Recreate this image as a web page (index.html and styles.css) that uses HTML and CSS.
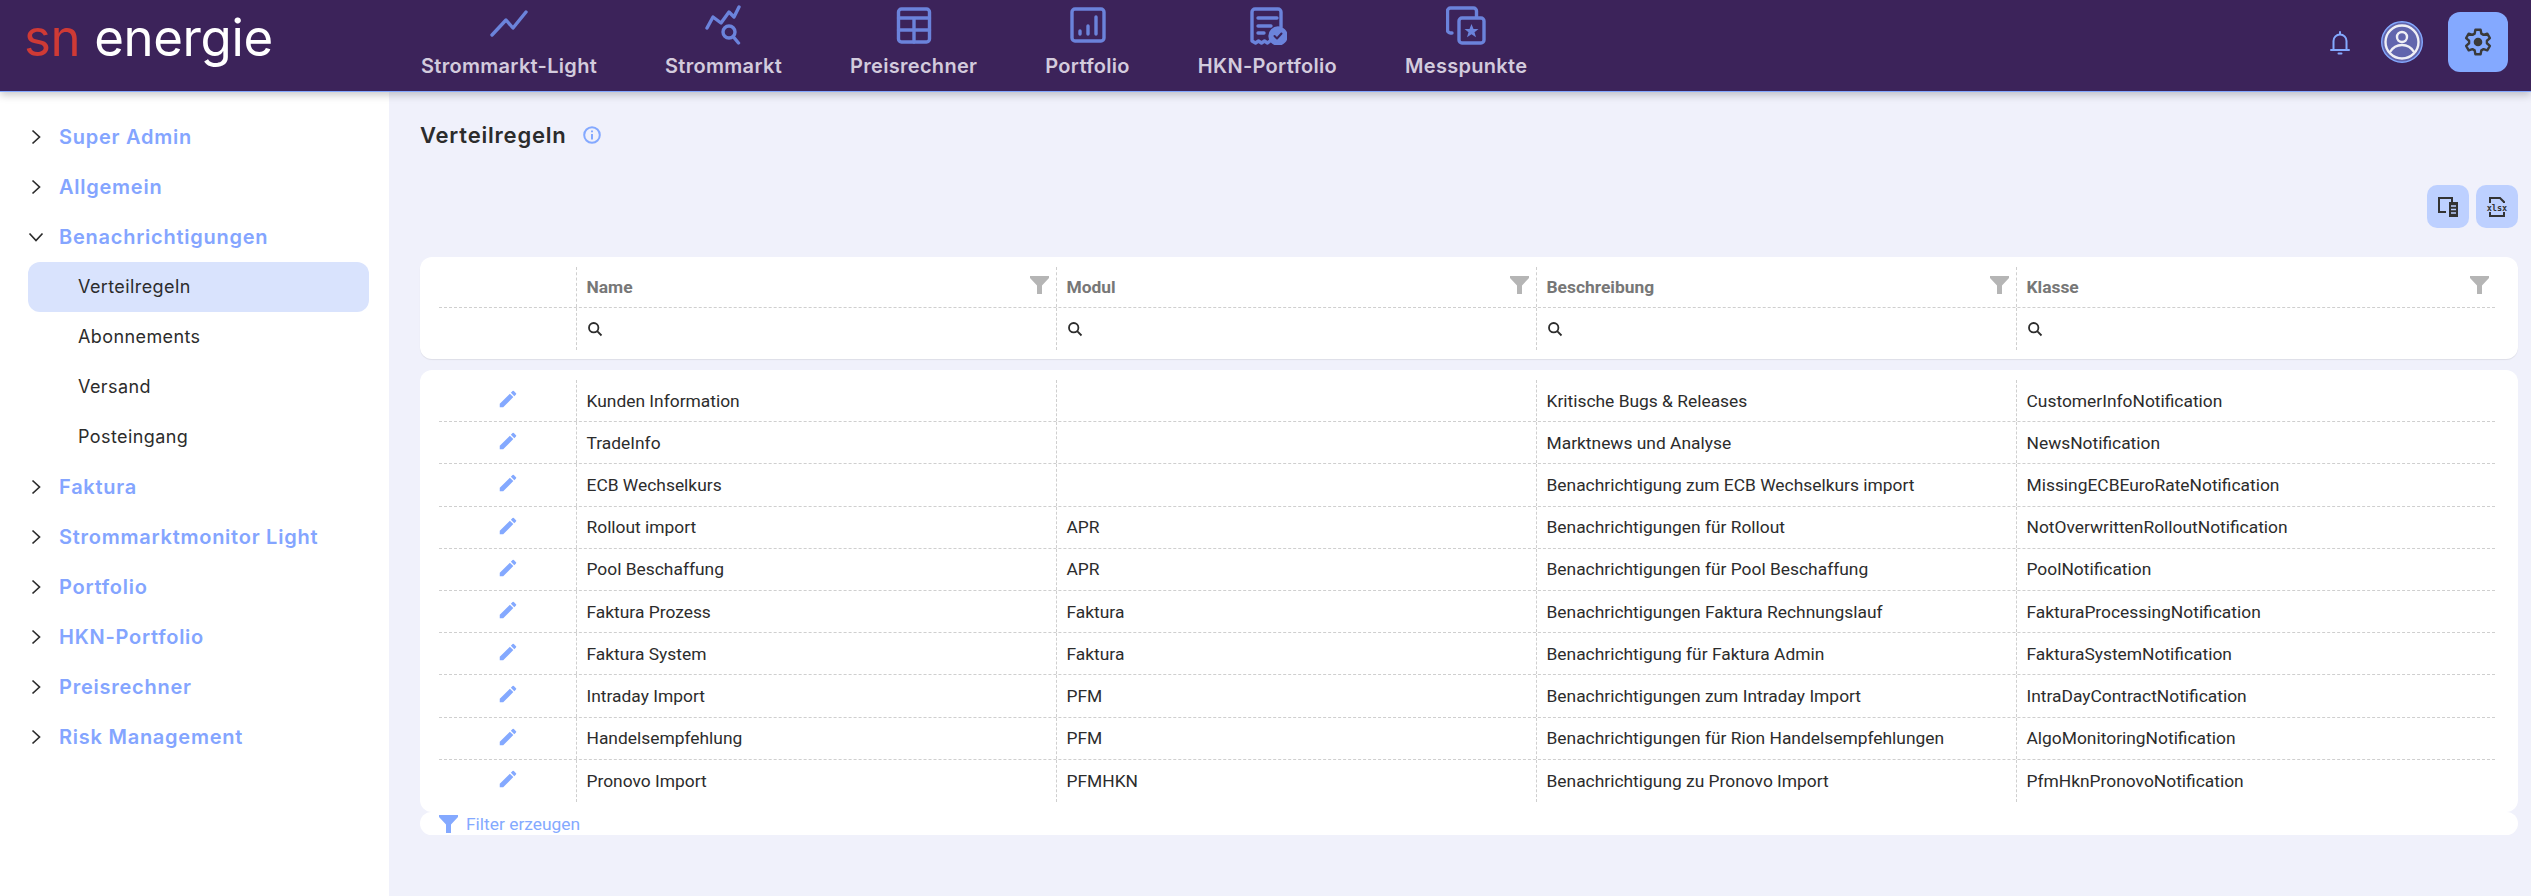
FILE: index.html
```html
<!DOCTYPE html>
<html lang="de">
<head>
<meta charset="utf-8">
<title>Verteilregeln</title>
<link rel="stylesheet" href="styles.css">
</head>
<body>
<svg class="defs" width="0" height="0" aria-hidden="true">
  <symbol id="pencil" viewBox="0 0 24 24"><path d="M3 17.25V21h3.75L17.81 9.94l-3.75-3.75L3 17.25zM20.71 7.04a1 1 0 0 0 0-1.41l-2.34-2.34a1 1 0 0 0-1.41 0l-1.83 1.83 3.75 3.75 1.83-1.83z"/></symbol>
  <symbol id="search" viewBox="0 0 16 16"><circle cx="6.7" cy="6.7" r="4.7" fill="none" stroke="currentColor" stroke-width="1.8"/><path d="M10.2 10.2l4.3 4.3" stroke="currentColor" stroke-width="1.8" fill="none"/></symbol>
  <symbol id="funnel" viewBox="0 0 19 18"><path d="M0 0h19v2L12 9.5V18H7V9.5L0 2z"/></symbol>
  <symbol id="chev-r" viewBox="0 0 12 16"><path d="M2.5 1.5L9.5 8l-7 6.500" fill="none" stroke="currentColor" stroke-width="1.700"/></symbol>
  <symbol id="chev-d" viewBox="0 0 16 12"><path d="M1.500 2.500L8 9.500l6.500-7" fill="none" stroke="currentColor" stroke-width="1.700"/></symbol>
</svg>

<header class="topbar">
  <div class="logo"><span class="logo-sn">sn</span> energie</div>
  <nav class="mainnav">
    <a class="navitem">
      <svg class="navicon" viewBox="0 0 40 40"><path d="M3 30L17 15l7 8L37 7"/></svg>
      <span>Strommarkt-Light</span>
    </a>
    <a class="navitem">
      <svg class="navicon" viewBox="0 0 40 40"><path d="M3 23L9 12l8 6 8-11 5 5 5-10"/><circle cx="25" cy="27" r="6"/><path d="M29.500 32l5 6"/></svg>
      <span>Strommarkt</span>
    </a>
    <a class="navitem">
      <svg class="navicon" viewBox="0 0 40 40"><rect x="4.500" y="4" width="31" height="33" rx="3"/><path d="M4.500 13h31M4.500 25h31M20 13v24"/></svg>
      <span>Preisrechner</span>
    </a>
    <a class="navitem">
      <svg class="navicon" viewBox="0 0 40 40"><rect x="4" y="4" width="32" height="32" rx="3"/><path d="M12 29v-3M20 29v-8M28 29V12"/></svg>
      <span>Portfolio</span>
    </a>
    <a class="navitem">
      <svg class="navicon" viewBox="0 0 40 40"><path d="M23 36l-2.500 2-3-2-3 2-3-2-3 2-3.500-2V7a3 3 0 0 1 3-3h23a3 3 0 0 1 3 3v15"/><path d="M11 13h19M11 21h13M11 28h6"/><circle class="solid" cx="31" cy="31" r="8"/><path class="tick" d="M27.500 31l2.500 2.500 4.500-5"/></svg>
      <span>HKN-Portfolio</span>
    </a>
    <a class="navitem">
      <svg class="navicon" viewBox="0 0 40 40"><path d="M6 28H4.500a3 3 0 0 1-3-3V6a3 3 0 0 1 3-3h23a3 3 0 0 1 3 3v6"/><rect x="13" y="13" width="25" height="25" rx="3"/><path class="solid noline" d="M25.500 19l2 5h5l-4 3.300 1.500 5-4.500-3-4.500 3 1.500-5-4-3.300h5z"/></svg>
      <span>Messpunkte</span>
    </a>
  </nav>
  <div class="topactions">
    <svg class="bell" viewBox="0 0 20 25"><path d="M1 20h18M3.500 20v-9a6.500 6.500 0 0 1 13 0v9M10 2v2.500M8.500 23.500h3"/></svg>
    <svg class="avatar" viewBox="0 0 42 42"><circle class="av-bg" cx="21" cy="21" r="20.300"/><circle class="av-line" cx="21" cy="21" r="16.500"/><circle class="av-line" cx="21" cy="16" r="5"/><path class="av-line" d="M9 31c3-5 7.500-7 12-7s9 2 12 7"/></svg>
    <button class="gearbtn">
      <svg class="gear" viewBox="0 0 28 28"><path d="M10.630 5.660L11.400 1.770H16.600L17.370 5.660L19.540 6.910L23.290 5.640L25.890 10.140L22.910 12.750V15.250L25.890 17.860L23.290 22.360L19.540 21.090L17.370 22.340L16.600 26.230H11.400L10.630 22.340L8.460 21.090L4.710 22.360L2.110 17.860L5.090 15.250V12.750L2.110 10.140L4.710 5.640L8.460 6.910z"/><circle class="gear-hub" cx="14" cy="14" r="4.300"/></svg>
    </button>
  </div>
</header>

<div class="layout">
  <aside class="sidebar">
    <div class="group"><svg class="chev"><use href="#chev-r"/></svg>Super Admin</div>
    <div class="group"><svg class="chev"><use href="#chev-r"/></svg>Allgemein</div>
    <div class="group"><svg class="chev chev-open"><use href="#chev-d"/></svg>Benachrichtigungen</div>
    <div class="sub sub-active">Verteilregeln</div>
    <div class="sub">Abonnements</div>
    <div class="sub">Versand</div>
    <div class="sub">Posteingang</div>
    <div class="group"><svg class="chev"><use href="#chev-r"/></svg>Faktura</div>
    <div class="group"><svg class="chev"><use href="#chev-r"/></svg>Strommarktmonitor Light</div>
    <div class="group"><svg class="chev"><use href="#chev-r"/></svg>Portfolio</div>
    <div class="group"><svg class="chev"><use href="#chev-r"/></svg>HKN-Portfolio</div>
    <div class="group"><svg class="chev"><use href="#chev-r"/></svg>Preisrechner</div>
    <div class="group"><svg class="chev"><use href="#chev-r"/></svg>Risk Management</div>
  </aside>

  <main class="content">
    <div class="titlerow">
      <h1 class="title">Verteilregeln</h1>
      <svg class="info" viewBox="0 0 18 18"><circle cx="9" cy="9" r="7.800"/><path d="M9 8v5.500M9 4.500v1.800"/></svg>
    </div>
    <div class="toolbar">
      <button class="toolbtn">
        <svg class="toolicon" viewBox="0 0 22 22"><path class="ti-line" d="M9 16H2V2h13v4"/><path class="ti-fill" d="M12 6h9v15h-9z"/><path class="ti-cut" d="M14 10h5M14 13.500h5M14 17h5"/></svg>
      </button>
      <button class="toolbtn">
        <svg class="toolicon" viewBox="0 0 22 22"><path class="ti-line" d="M4 7V2h10l4 4v1M4 16v4h14v-4"/><text class="ti-text" x="11" y="14.500">xlsx</text></svg>
      </button>
    </div>

    <section class="card headcard">
      <div class="row headrow">
        <div class="cell"></div>
        <div class="cell hcell">Name<svg class="hfilter"><use href="#funnel"/></svg></div>
        <div class="cell hcell">Modul<svg class="hfilter"><use href="#funnel"/></svg></div>
        <div class="cell hcell">Beschreibung<svg class="hfilter"><use href="#funnel"/></svg></div>
        <div class="cell hcell">Klasse<svg class="hfilter"><use href="#funnel"/></svg></div>
      </div>
      <div class="row searchrow">
        <div class="cell"></div>
        <div class="cell"><svg class="sicon"><use href="#search"/></svg></div>
        <div class="cell"><svg class="sicon"><use href="#search"/></svg></div>
        <div class="cell"><svg class="sicon"><use href="#search"/></svg></div>
        <div class="cell"><svg class="sicon"><use href="#search"/></svg></div>
      </div>
    </section>

    <section class="card bodycard">
      <div class="row"><div class="cell editcell"><svg class="pencil"><use href="#pencil"/></svg></div><div class="cell">Kunden Information</div><div class="cell"></div><div class="cell">Kritische Bugs &amp; Releases</div><div class="cell">CustomerInfoNotification</div></div>
      <div class="row"><div class="cell editcell"><svg class="pencil"><use href="#pencil"/></svg></div><div class="cell">TradeInfo</div><div class="cell"></div><div class="cell">Marktnews und Analyse</div><div class="cell">NewsNotification</div></div>
      <div class="row"><div class="cell editcell"><svg class="pencil"><use href="#pencil"/></svg></div><div class="cell">ECB Wechselkurs</div><div class="cell"></div><div class="cell">Benachrichtigung zum ECB Wechselkurs import</div><div class="cell">MissingECBEuroRateNotification</div></div>
      <div class="row"><div class="cell editcell"><svg class="pencil"><use href="#pencil"/></svg></div><div class="cell">Rollout import</div><div class="cell">APR</div><div class="cell">Benachrichtigungen für Rollout</div><div class="cell">NotOverwrittenRolloutNotification</div></div>
      <div class="row"><div class="cell editcell"><svg class="pencil"><use href="#pencil"/></svg></div><div class="cell">Pool Beschaffung</div><div class="cell">APR</div><div class="cell">Benachrichtigungen für Pool Beschaffung</div><div class="cell">PoolNotification</div></div>
      <div class="row"><div class="cell editcell"><svg class="pencil"><use href="#pencil"/></svg></div><div class="cell">Faktura Prozess</div><div class="cell">Faktura</div><div class="cell">Benachrichtigungen Faktura Rechnungslauf</div><div class="cell">FakturaProcessingNotification</div></div>
      <div class="row"><div class="cell editcell"><svg class="pencil"><use href="#pencil"/></svg></div><div class="cell">Faktura System</div><div class="cell">Faktura</div><div class="cell">Benachrichtigung für Faktura Admin</div><div class="cell">FakturaSystemNotification</div></div>
      <div class="row"><div class="cell editcell"><svg class="pencil"><use href="#pencil"/></svg></div><div class="cell">Intraday Import</div><div class="cell">PFM</div><div class="cell">Benachrichtigungen zum Intraday Import</div><div class="cell">IntraDayContractNotification</div></div>
      <div class="row"><div class="cell editcell"><svg class="pencil"><use href="#pencil"/></svg></div><div class="cell">Handelsempfehlung</div><div class="cell">PFM</div><div class="cell">Benachrichtigungen für Rion Handelsempfehlungen</div><div class="cell">AlgoMonitoringNotification</div></div>
      <div class="row lastrow"><div class="cell editcell"><svg class="pencil"><use href="#pencil"/></svg></div><div class="cell">Pronovo Import</div><div class="cell">PFMHKN</div><div class="cell">Benachrichtigung zu Pronovo Import</div><div class="cell">PfmHknPronovoNotification</div></div>
    </section>

    <div class="filterbar"><svg class="ffunnel"><use href="#funnel"/></svg><span>Filter erzeugen</span></div>
  </main>
</div>
</body>
</html>
```
FILE: styles.css
```css
* { box-sizing: border-box; }
html, body { margin: 0; height: 100%; }
body {
  width: 2531px;
  height: 896px;
  overflow: hidden;
  background: #f0f1fb;
  font-family: "Roboto", "Liberation Sans", sans-serif;
  color: #2c2c2c;
  display: flex;
  flex-direction: column;
}
.defs { position: absolute; }

.topbar {
  height: 92px;
  flex: none;
  display: flex;
  align-items: flex-start;
  background: #3c235a;
  border-bottom: 1px solid #84a9ff;
  box-shadow: 0 3px 8px rgba(0,0,0,.22);
  position: relative;
  z-index: 2;
}
.logo {
  width: 387px;
  flex: none;
  padding: 8px 0 0 24px;
  font-family: "Inter", sans-serif;
  font-weight: 400;
  font-size: 51px;
  letter-spacing: -0.4px;
  line-height: 60px;
  color: #fff;
  white-space: nowrap;
}
.logo-sn { color: #cf3a35; }
.mainnav { display: flex; }
.navitem {
  display: flex;
  flex-direction: column;
  align-items: center;
  padding: 5px 34px 0;
  color: #d3cbdd;
  font-family: "Inter", sans-serif;
  font-weight: 600;
  font-size: 20px;
  letter-spacing: 0.3px;
  line-height: 26px;
  white-space: nowrap;
}
.navitem span { margin-top: 8px; }
.navicon {
  width: 40px;
  height: 40px;
  fill: none;
  stroke: #6b83db;
  stroke-width: 3.4;
  stroke-linecap: round;
  stroke-linejoin: round;
}
.navicon .solid { fill: #6b83db; stroke: #6b83db; }
.navicon .noline { stroke: none; }
.navicon .tick { stroke: #3c235a; stroke-width: 2; }

.topactions {
  margin-left: auto;
  padding: 12px 23px 0 0;
  display: flex;
  align-items: center;
}
.bell { width: 20px; height: 25px; fill: none; stroke: #84a9ff; stroke-width: 2; margin-right: 31px; stroke-linecap: round; }
.avatar { width: 42px; height: 42px; margin-right: 25px; }
.av-bg { fill: #6165ad; stroke: #84a9ff; stroke-width: 1.4; }
.av-line { fill: none; stroke: #efeff5; stroke-width: 2.4; }
.gearbtn {
  width: 60px;
  height: 60px;
  border: 0;
  padding: 0;
  border-radius: 12px;
  background: #84a9ff;
  display: flex;
  align-items: center;
  justify-content: center;
}
.gear { width: 28px; height: 28px; fill: none; stroke: #3a3a3a; stroke-width: 2.4; stroke-linejoin: round; }
.gear .gear-hub { fill: #3a3a3a; stroke: none; }

.layout { flex: 1; display: flex; min-height: 0; }
.sidebar {
  width: 389px;
  flex: none;
  background: #fff;
  padding: 20px 20px 0 28px;
}
.group, .sub {
  height: 50px;
  display: flex;
  align-items: center;
  font-family: "Inter", sans-serif;
  white-space: nowrap;
}
.group { font-weight: 600; font-size: 20px; letter-spacing: 0.75px; color: #84a5ff; padding-left: 31px; position: relative; }
.chev { position: absolute; left: 2px; top: 17px; width: 12px; height: 16px; color: #2c2c2c; }
.chev-open { left: 0; top: 19px; width: 16px; height: 12px; }
.sub { font-size: 18px; letter-spacing: 0.4px; padding: 0 0 2px 50px; color: #2c2c2c; border-radius: 12px; }
.sub-active { background: #d9e3fd; }

.content { flex: 1; min-width: 0; padding: 23px 13px 0 31px; }
.titlerow { height: 40px; display: flex; align-items: center; }
.title {
  margin: 0;
  font-family: "Inter", sans-serif;
  font-weight: 600;
  font-size: 22px;
  letter-spacing: 0.8px;
  color: #2c2c2c;
}
.info { width: 18px; height: 18px; margin-left: 16px; fill: none; stroke: #84a9ff; stroke-width: 2; }
.toolbar { margin-top: 30px; height: 43px; display: flex; justify-content: flex-end; gap: 7px; }
.toolbtn {
  width: 42px;
  height: 43px;
  padding: 0;
  border: 0;
  border-radius: 10px;
  background: #bdd0ff;
  display: flex;
  align-items: center;
  justify-content: center;
}
.toolicon { width: 22px; height: 22px; }
.ti-line { fill: none; stroke: #333; stroke-width: 2; }
.ti-fill { fill: #333; }
.ti-cut { fill: none; stroke: #bdd0ff; stroke-width: 1.500; }
.ti-text { font-family: "DejaVu Sans Mono", monospace; font-size: 8.500px; font-weight: 700; fill: #333; text-anchor: middle; }

.card { background: #fff; border-radius: 12px; padding: 10px 23px 9px 19px; }
.headcard { margin-top: 29px; height: 102px; box-shadow: 0 1px 1px rgba(0,0,0,.08); }
.bodycard { margin-top: 11px; height: 442px; }
.row {
  display: grid;
  grid-template-columns: 137px repeat(4, 480px);
  height: 42.200px;
  border-bottom: 1px dashed #cfcfcf;
  font-size: 17.400px;
  color: #2c2c2c;
}
.lastrow, .searchrow { border-bottom: 0; }
.headrow { height: 41px; }
.searchrow { height: 42px; }
.cell {
  display: flex;
  align-items: center;
  position: relative;
  padding-left: 9.500px;
  border-left: 1px dashed #cfcfcf;
  white-space: nowrap;
}
.cell:first-child { border-left: 0; }
.editcell { justify-content: center; padding-left: 0; padding-bottom: 3px; }
.hcell { font-weight: 700; color: #777; }
.hfilter { position: absolute; right: 7px; top: 9px; width: 19px; height: 18px; fill: #b5b5b5; }
.sicon { width: 16px; height: 16px; color: #2c2c2c; }
.pencil { width: 22px; height: 22px; fill: #84a9ff; }

.filterbar {
  height: 23px;
  background: #fff;
  border-radius: 12px;
  display: flex;
  align-items: center;
  padding-left: 19px;
  color: #84a9ff;
  font-size: 17.400px;
}
.ffunnel { width: 19px; height: 18px; fill: #84a9ff; margin-right: 8px; }
```
